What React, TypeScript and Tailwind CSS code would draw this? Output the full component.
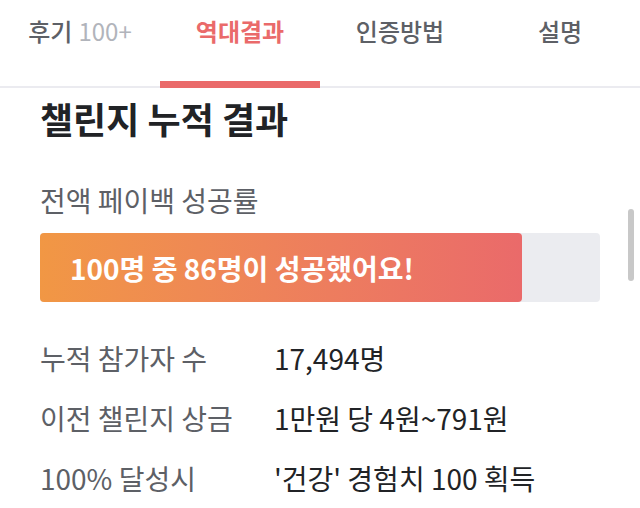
import React from "react";

const tabs = [
  { key: "review", label: "후기", extra: "100+" },
  { key: "history", label: "역대결과" },
  { key: "verify", label: "인증방법" },
  { key: "desc", label: "설명" },
];

const stats = [
  { label: "누적 참가자 수", value: "17,494명" },
  { label: "이전 챌린지 상금", value: "1만원 당 4원~791원" },
  { label: "100% 달성시", value: "'건강' 경험치 100 획득" },
];

const App = () => {
  const active = "history";
  const rate = 86;

  return (
    <div
      className="relative w-[640px] h-[508px] overflow-hidden bg-white"
      style={{ fontFamily: '"Liberation Sans Narrow", "Noto Sans CJK KR", "Noto Sans", sans-serif' }}
    >
      {/* tabs */}
      <div className="flex h-[88px] border-b-2 border-[#ebebf0]">
        {tabs.map((tab) => {
          const isActive = tab.key === active;
          return (
            <div
              key={tab.key}
              className={
                isActive
                  ? "relative flex-1 flex justify-center pt-[14px] text-[24px] leading-[34px] font-bold text-[#ea6a6a]"
                  : "relative flex-1 flex justify-center pt-[14px] text-[24px] leading-[34px] font-medium text-[#5d6066]"
              }
            >
              <span>
                {tab.label}
                {tab.extra && (
                  <span className="ml-[6px] font-normal text-[#b1b4bb]">{tab.extra}</span>
                )}
              </span>
              {isActive && (
                <div className="absolute left-0 right-0 -bottom-[2px] h-[7px] bg-[#ea6a6a]" />
              )}
            </div>
          );
        })}
      </div>

      <div className="px-10">
        <h2 className="mt-[8px] text-[36px] font-bold leading-[44px] text-[#212326]">
          챌린지 누적 결과
        </h2>

        <p className="mt-[40px] text-[28px] leading-[40px] text-[#5d6066]">전액 페이백 성공률</p>

        {/* progress */}
        <div className="mt-[13px] h-[69px] rounded-[4px] bg-[#ebecf0]">
          <div
            className="h-full rounded-[4px] bg-gradient-to-r from-[#f19744] to-[#ea6a6a] flex items-center pl-[30px]"
            style={{ width: `${rate}%` }}
          >
            <span className="text-[28px] leading-[40px] font-bold text-white whitespace-nowrap">
              100명 중 86명이 성공했어요!
            </span>
          </div>
        </div>

        <div className="mt-[36px] flex flex-col gap-[20px]">
          {stats.map((s) => (
            <div key={s.label} className="flex text-[28px] leading-[40px]">
              <span className="w-[234px] text-[#5d6066]">{s.label}</span>
              <span className="text-[#212326]">{s.value}</span>
            </div>
          ))}
        </div>
      </div>

      {/* scrollbar thumb */}
      <div className="absolute left-[628px] top-[209px] w-[6px] h-[72px] rounded-full bg-[#c8c8c8]" />
    </div>
  );
};

export default App;
